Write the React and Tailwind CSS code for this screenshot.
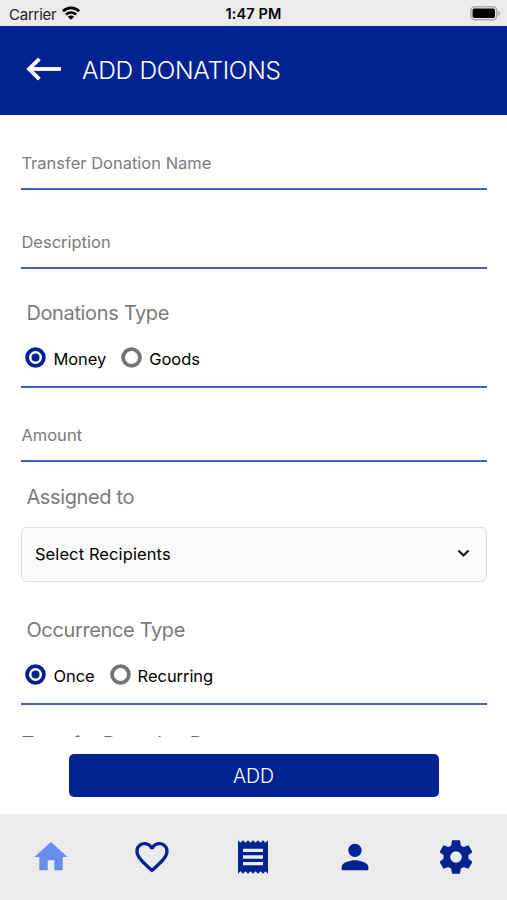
import React, { useState } from 'react';
import { MdHome, MdFavoriteBorder, MdReceipt, MdPerson } from 'react-icons/md';

function Cog({ size }) {
  return (
    <svg width={size} height={size} viewBox="0 0 24 24" fill="currentColor">
      <path d="M12,15.5A3.5,3.5 0 0,1 8.5,12A3.5,3.5 0 0,1 12,8.5A3.5,3.5 0 0,1 15.5,12A3.5,3.5 0 0,1 12,15.5M19.43,12.97C19.47,12.65 19.5,12.33 19.5,12C19.5,11.67 19.47,11.34 19.43,11L21.54,9.37C21.73,9.22 21.78,8.95 21.66,8.73L19.66,5.27C19.54,5.05 19.27,4.96 19.05,5.05L16.56,6.05C16.04,5.66 15.5,5.32 14.87,5.07L14.5,2.42C14.46,2.18 14.25,2 14,2H10C9.75,2 9.54,2.18 9.5,2.42L9.13,5.07C8.5,5.32 7.96,5.66 7.44,6.05L4.95,5.05C4.73,4.96 4.46,5.05 4.34,5.27L2.34,8.73C2.21,8.95 2.27,9.22 2.46,9.37L4.57,11C4.53,11.34 4.5,11.67 4.5,12C4.5,12.33 4.53,12.65 4.57,12.97L2.46,14.63C2.27,14.78 2.21,15.05 2.34,15.27L4.34,18.73C4.46,18.95 4.73,19.03 4.95,18.95L7.44,17.94C7.96,18.34 8.5,18.68 9.13,18.93L9.5,21.58C9.54,21.82 9.75,22 10,22H14C14.25,22 14.46,21.82 14.5,21.58L14.87,18.93C15.5,18.67 16.04,18.34 16.56,17.94L19.05,18.95C19.27,19.03 19.54,18.95 19.66,18.73L21.66,15.27C21.78,15.05 21.73,14.78 21.54,14.63L19.43,12.97Z" />
    </svg>
  );
}

const tabs = [
  { name: 'home', Icon: MdHome },
  { name: 'favorites', Icon: MdFavoriteBorder },
  { name: 'receipts', Icon: MdReceipt },
  { name: 'profile', Icon: MdPerson },
  { name: 'settings', Icon: Cog },
];

function StatusBar() {
  return (
    <div className="grid grid-cols-3 items-center h-[26px] shrink-0 bg-[#ebebeb] pl-[9px] pr-[6px] pt-[2px] text-black">
      <div className="flex items-center gap-[6px]">
        <span className="text-[15px] leading-none tracking-[-0.25px] text-[#222]">Carrier</span>
        <svg width="18" height="14" viewBox="0 0 18 14" fill="none" stroke="black" strokeWidth="2.7" className="mb-[2px]">
          <path d="M0.9 5.2a11.6 11.6 0 0 1 16.2 0" />
          <path d="M3.9 8.6a7.3 7.3 0 0 1 10.2 0" />
          <path d="M9 13.8L5.8 10.8a4.5 4.5 0 0 1 6.4 0z" fill="black" stroke="none" />
        </svg>
      </div>
      <span className="text-center text-[14.5px] leading-none tracking-[0.15px] font-semibold pr-[3px]">1:47 PM</span>
      <svg className="justify-self-end mb-[2px]" width="31" height="15" viewBox="0 0 31 15">
        <rect x="0.8" y="0.8" width="26" height="13" rx="4" fill="#ebebeb" stroke="#a9a9a9" strokeWidth="1.6" />
        <rect x="2.6" y="2.6" width="22.4" height="9.4" rx="1.8" fill="black" />
        <path d="M28.4 5v5c1.2-.5 1.9-1.4 1.9-2.5s-.7-2-1.9-2.5z" fill="#a9a9a9" />
      </svg>
    </div>
  );
}

function Header() {
  return (
    <header className="flex items-center h-[89px] shrink-0 bg-[#002391] pl-[26px] gap-[20px] text-white">
      <svg width="36" height="24" viewBox="0 0 36 24" fill="none" stroke="white" strokeWidth="3.8" className="mb-[4px]">
        <path d="M35 12H3.5" />
        <path d="M13.4 1.8L3 12L13.4 22.2" />
      </svg>
      <h1 className="text-[24.5px] leading-none tracking-[-0.3px] font-light">ADD DONATIONS</h1>
    </header>
  );
}

function Field({ placeholder }) {
  return (
    <input
      placeholder={placeholder}
      className="block w-full h-[53px] border-b-2 border-[#4a63b2] outline-none text-[16.5px] placeholder:text-[#7b7b7b]"
    />
  );
}

function Label({ children }) {
  return <p className="pl-[5px] text-[20px] leading-[24px] tracking-[-0.36px] text-[#7b7b7b]">{children}</p>;
}

function Radio({ label, checked, onClick }) {
  return (
    <button onClick={onClick} className="flex items-center gap-[7px]">
      <svg width="21" height="21" viewBox="0 0 21 21" className="mb-[4px]">
        <circle cx="10.5" cy="10.5" r="8.4" fill="none" stroke={checked ? '#002391' : '#757575'} strokeWidth="3.8" />
        {checked && <circle cx="10.5" cy="10.5" r="4" fill="#002391" />}
      </svg>
      <span className="mb-[2px] text-[16.5px] leading-[20px] tracking-[-0.05px]">{label}</span>
    </button>
  );
}

function RadioGroup({ options }) {
  const [value, setValue] = useState(options[0]);
  return (
    <div className="flex items-start gap-[15px] h-[41px] pl-[4px] border-b-2 border-[#4a63b2]">
      {options.map((o) => (
        <Radio key={o} label={o} checked={o === value} onClick={() => setValue(o)} />
      ))}
    </div>
  );
}

export default function App() {
  const [active, setActive] = useState('home');

  return (
    <div className="flex flex-col w-full h-screen overflow-hidden bg-white font-['Inter',sans-serif] text-black">
      <StatusBar />
      <Header />

      {/* Form, cut off above the add button */}
      <main className="h-[622px] shrink-0 overflow-hidden pl-[21.4px] pr-[20.5px] pt-[22px]">
        <Field placeholder="Transfer Donation Name" />
        <div className="mt-[26px]"><Field placeholder="Description" /></div>

        <div className="mt-[32px]"><Label>Donations Type</Label></div>
        <div className="mt-[22px]"><RadioGroup options={['Money', 'Goods']} /></div>

        <div className="mt-[21px]"><Field placeholder="Amount" /></div>

        <div className="mt-[23px]"><Label>Assigned to</Label></div>
        <button className="flex items-center justify-between mt-[18px] w-full h-[55px] rounded-[6px] border border-[#dfdfdf] bg-[#fafafa] pl-[12.5px] pr-[16px]">
          <span className="text-[16.5px] tracking-[0.1px]">Select Recipients</span>
          <svg width="13" height="9" viewBox="0 0 13 9" fill="none" stroke="#111" strokeWidth="2.1" className="mb-[2px]">
            <path d="M1.4 1.6L6.5 6.6L11.6 1.6" />
          </svg>
        </button>

        <div className="mt-[36px]"><Label>Occurrence Type</Label></div>
        <div className="mt-[22px]"><RadioGroup options={['Once', 'Recurring']} /></div>

        <p className="mt-[27px] text-[20px] leading-[24px] tracking-[-0.36px] text-[#6b6b6b]">Transfer Donation Date</p>
      </main>

      <div className="flex-1 flex items-start justify-center pt-[17px]">
        <button className="w-[370px] h-[43px] rounded-[5px] bg-[#002391] pt-[2px] text-white text-[19.5px] font-light">ADD</button>
      </div>

      <nav className="grid grid-cols-5 items-center h-[86px] shrink-0 bg-[#ebebeb]">
        {tabs.map(({ name, Icon }) => (
          <button
            key={name}
            aria-label={name}
            onClick={() => setActive(name)}
            className={`flex justify-center ${active === name ? 'text-[#678cec]' : 'text-[#002391]'}`}
          >
            <Icon size={40} />
          </button>
        ))}
      </nav>
    </div>
  );
}
